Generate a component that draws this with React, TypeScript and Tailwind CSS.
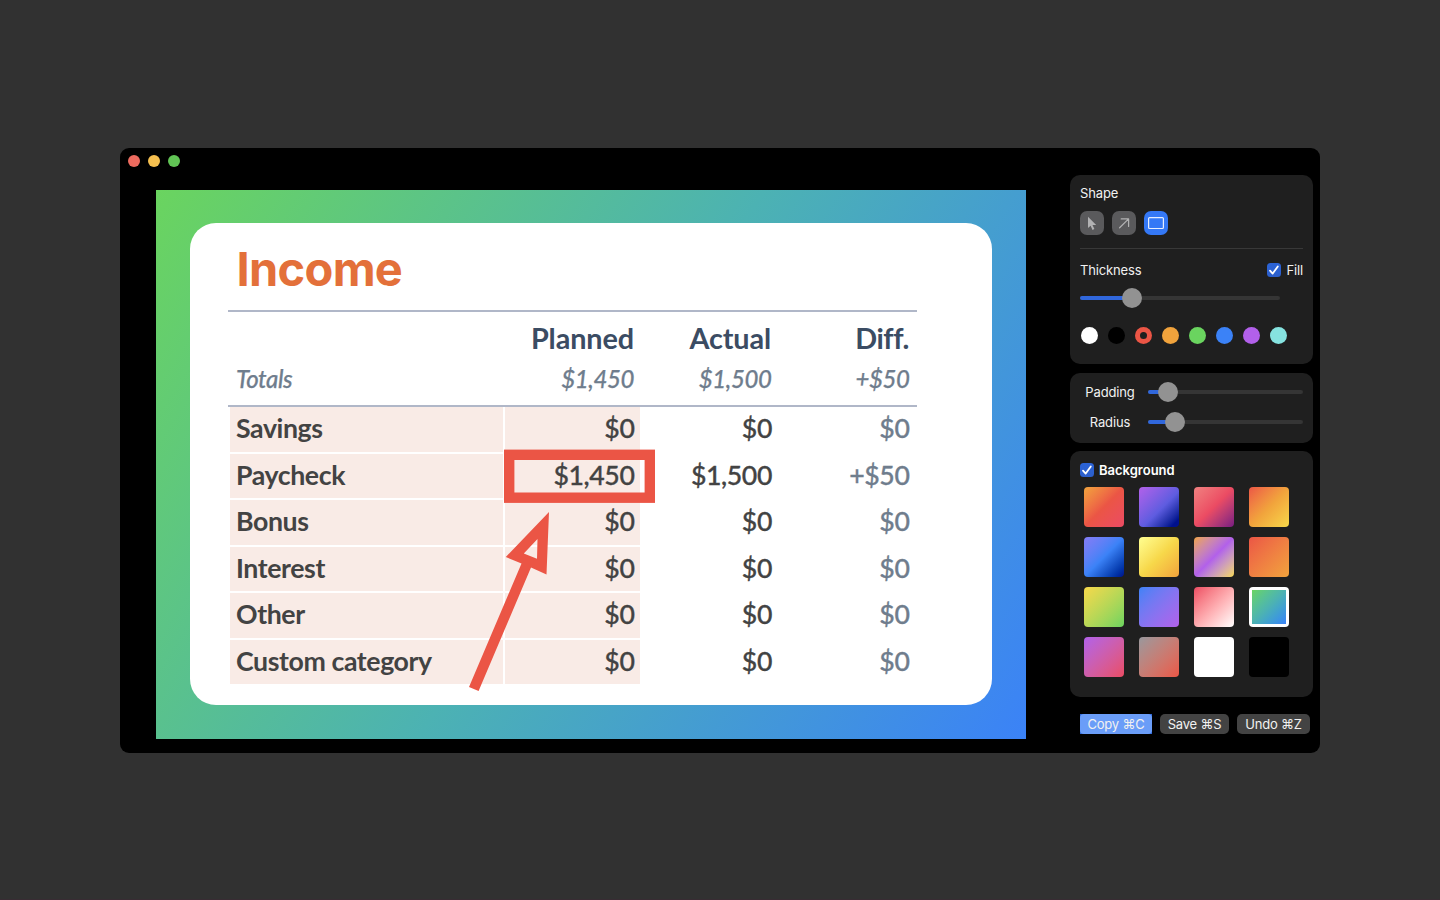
import React from "react";

type Row = { name: string; planned: string; actual: string; diff: string };

const rows: Row[] = [
  { name: "Savings", planned: "$0", actual: "$0", diff: "$0" },
  { name: "Paycheck", planned: "$1,450", actual: "$1,500", diff: "+$50" },
  { name: "Bonus", planned: "$0", actual: "$0", diff: "$0" },
  { name: "Interest", planned: "$0", actual: "$0", diff: "$0" },
  { name: "Other", planned: "$0", actual: "$0", diff: "$0" },
  { name: "Custom category", planned: "$0", actual: "$0", diff: "$0" },
];

const colors = [
  "bg-white",
  "bg-black",
  "bg-[#eb5545]",
  "bg-[#f1a33c]",
  "bg-[#6ad45f]",
  "bg-[#3b82f7]",
  "bg-[#b260ea]",
  "bg-[#86e3e0]",
];

const swatches = [
  "bg-linear-135 from-[#f1a33c] via-[#eb5545] to-[#eb4b63]",
  "bg-linear-135 from-[#b260ea] via-[#5e5ce0] via-55% to-[#00108c] to-90%",
  "bg-linear-135 from-[#f08080] via-[#eb4b63] to-[#7a1a80]",
  "bg-linear-135 from-[#eb5545] via-[#f1a33c] to-[#f7d84a]",
  "bg-linear-135 from-[#847cf5] via-[#3b82f7] to-[#00108c]",
  "bg-linear-135 from-[#ffff90] via-[#f7d84a] to-[#f1a33c]",
  "bg-linear-135 from-[#f1a33c] via-[#b260ea] to-[#f7d84a]",
  "bg-linear-135 from-[#eb5545] to-[#f1a33c]",
  "bg-linear-135 from-[#f7d84a] to-[#6ad45f]",
  "bg-linear-135 from-[#3b82f7] to-[#b260ea]",
  "bg-linear-135 from-[#eb4b63] to-white",
  "bg-linear-135 from-[#6ad45f] via-[#4cb2b3] to-[#3b82f7]",
  "bg-linear-135 from-[#b260ea] to-[#eb4b63]",
  "bg-linear-135 from-[#98989d] to-[#eb5545]",
  "bg-white",
  "bg-black",
];

function Checkbox() {
  return (
    <span className="flex size-3.5 shrink-0 items-center justify-center rounded-[3.5px] bg-linear-to-b from-[#2b63d6] to-[#2c5fcb]">
      <svg viewBox="0 0 14 14" className="size-3.5" fill="none" stroke="#fff" strokeWidth="1.8" strokeLinecap="round" strokeLinejoin="round">
        <path d="M3 7.6 5.7 10.6 10.8 3.4" />
      </svg>
    </span>
  );
}

function Slider({ value, width }: { value: number; width: number }) {
  return (
    <div className="relative flex h-5 items-center" style={{ width }}>
      <div className="h-1 w-full overflow-hidden rounded-full bg-[#353535]">
        <div className="h-full bg-[#3067dc]" style={{ width: value }} />
      </div>
      <div className="absolute top-0 size-5 -translate-x-1/2 rounded-full bg-[#929292]" style={{ left: value }} />
    </div>
  );
}

function ShapeTools() {
  return (
    <div className="flex gap-2">
      <div className="size-6 rounded-[7px] bg-[#5a5a5c]">
        <svg viewBox="0 0 24 24" className="size-6" fill="#b2b2b3">
          <path d="M8 5.8v11.3l2.6-2.4 1.9 4.2 1.9-.9-1.9-4h3.7z" />
        </svg>
      </div>
      <div className="size-6 rounded-[7px] bg-[#5a5a5c]">
        <svg viewBox="0 0 24 24" className="size-6" fill="none" stroke="#b2b2b3" strokeWidth="1.2" strokeLinecap="round" strokeLinejoin="round">
          <path d="M7.6 16.8 16.6 7.9M9.2 7.9h7.4v7.6" />
        </svg>
      </div>
      <div className="size-6 rounded-[7px] bg-[#3478f6]">
        <svg viewBox="0 0 24 24" className="size-6" fill="none" stroke="#e4edff" strokeWidth="1.2">
          <rect x="4.6" y="6.6" width="14.8" height="10.9" rx="1" />
        </svg>
      </div>
    </div>
  );
}

function BudgetTable() {
  return (
    <div className="font-['Lato',sans-serif] text-[26.7px] font-medium tracking-[-0.4px] text-[#434343]">
      <div className="mt-[13px] h-[97px] w-[689px] border-y-2 border-[#b0b7c8]">
        <div className="flex h-[53px] items-center text-[28.8px] font-bold tracking-[-0.1px] text-[#3b4c63]">
          <span className="ml-auto w-[137px] text-right">Planned</span>
          <span className="w-[137px] text-right">Actual</span>
          <span className="mr-[8px] w-[138px] text-right tracking-[-0.4px]">Diff.</span>
        </div>
        <div className="flex h-[28px] items-center text-[24px] text-[#6f7d8d] italic [-webkit-text-stroke:0.25px]">
          <span className="ml-[8px]">Totals</span>
          <span className="ml-auto w-[137px] text-right">$1,450</span>
          <span className="w-[137.5px] text-right">$1,500</span>
          <span className="mr-[7.5px] w-[138px] text-right">+$50</span>
        </div>
      </div>
      <div className="ml-[2px] flex h-[277px] flex-col gap-[2px]">
        {rows.map((row) => (
          <div key={row.name} className="flex flex-1 items-center leading-[38px]">
            <div className="mr-[2px] flex h-full w-[273px] items-center bg-[#f9ebe6] pb-[2px] pl-[6px] font-bold">{row.name}</div>
            <div className="flex h-full w-[135px] items-center justify-end bg-[#f9ebe6] pr-[5.5px] pb-[2px] [-webkit-text-stroke:0.3px]">{row.planned}</div>
            <div className="w-[132px] pb-[2px] text-right [-webkit-text-stroke:0.3px]">{row.actual}</div>
            <div className="w-[137.5px] pb-[2px] text-right text-[#6f7d8d] [-webkit-text-stroke:0.3px]">{row.diff}</div>
          </div>
        ))}
      </div>
    </div>
  );
}

function Canvas() {
  return (
    <div className="relative mt-[41.5px] ml-[36px] h-[549.5px] w-[870px] bg-linear-[122.3deg] from-[#6ad45f] via-[#4cb2b3] to-[#3b82f7] px-[33.5px] pt-[33.5px]">
      <div className="h-[482px] w-[802.5px] rounded-[26px] bg-white pt-4 pl-[38.5px]">
        <h1 className="h-[58px] pl-[8.5px] font-['Inter',sans-serif] text-[47px] leading-[59px] font-bold tracking-[-0.7px] text-[#e3703a]">Income</h1>
        <BudgetTable />
      </div>
      <svg viewBox="156 189.5 870 549.5" className="absolute inset-0 h-full w-full" fill="none">
        <rect x="509.2" y="454.3" width="140.6" height="42.9" stroke="#eb5545" strokeWidth="10.4" />
        <path fill="#eb5545" fillRule="evenodd" d="M549 511.5 505.8 556.5 521.5 563 469 686.5 478.6 690.5 531 567 546.5 574ZM537.5 538.5 537 558.3 523.8 553Z" />
      </svg>
    </div>
  );
}

function Button({ label, className }: { label: string; className: string }) {
  return <button className={`flex h-5 items-center justify-center text-[13px] tracking-[-0.2px] ${className}`}>{label}</button>;
}

function Sidebar() {
  return (
    <aside className="absolute top-[27px] right-[7px] flex w-[243px] flex-col font-['Inter',sans-serif] text-[13px] leading-4 tracking-[-0.15px] text-[#f1f1f1]">
      <section className="h-[189px] rounded-[10px] bg-[#1f1f1f] px-2.5 pt-2.5">
        <div className="mb-[10px]">Shape</div>
        <ShapeTools />
        <div className="mt-[13px] h-px bg-[#383838]" />
        <div className="mt-[11.5px] flex h-[18px] items-center justify-between">
          <span>Thickness</span>
          <label className="flex items-center gap-[5px]">
            <Checkbox />
            <span>Fill</span>
          </label>
        </div>
        <div className="mt-[9.5px]">
          <Slider width={200} value={52} />
        </div>
        <div className="mt-[19px] ml-px flex gap-[10.5px]">
          {colors.map((color, i) => (
            <div key={color} className={`flex size-[16.5px] items-center justify-center rounded-full ${color}`}>
              {i === 2 && <span className="size-[7px] rounded-full bg-[#1f1f1f]" />}
            </div>
          ))}
        </div>
      </section>
      <section className="mt-[8.5px] flex h-[70px] flex-col gap-2.5 rounded-[10px] bg-[#1f1f1f] pt-[9.5px] pr-2.5 pl-2.5">
        <div className="flex items-center justify-between">
          <span className="w-[60px] text-center">Padding</span>
          <Slider width={155} value={19.5} />
        </div>
        <div className="flex items-center justify-between">
          <span className="w-[60px] text-center">Radius</span>
          <Slider width={155} value={26.5} />
        </div>
      </section>
      <section className="mt-[8px] h-[246px] rounded-[10px] bg-[#1f1f1f] px-2.5 pt-[11px]">
        <label className="flex items-center gap-[5px] font-semibold tracking-normal text-white">
          <Checkbox />
          <span>Background</span>
        </label>
        <div className="mt-[9px] ml-[3.5px] grid w-[206px] grid-cols-[repeat(4,40px)] justify-between gap-y-[10px]">
          {swatches.map((swatch, i) => (
            <div key={swatch} className={`h-[40px] rounded-[4px] ${i === 11 ? "bg-white p-[3px]" : ""}`}>
              <div className={`size-full ${i === 11 ? "" : "rounded-[4px]"} ${swatch}`} />
            </div>
          ))}
        </div>
      </section>
      <div className="mt-[17.5px] ml-[10px] flex gap-2 whitespace-nowrap">
        <div className="bg-[#2f68d8]">
          <Button label="Copy ⌘C" className="w-[72px] rounded-[4px] bg-[#6a9df8]" />
        </div>
        <Button label="Save ⌘S" className="w-[69px] rounded-[5px] bg-[#434343]" />
        <Button label="Undo ⌘Z" className="w-[73px] rounded-[5px] bg-[#434343]" />
      </div>
    </aside>
  );
}

export default function App() {
  return (
    <main className="h-[900px] w-[1440px] overflow-hidden border-b border-[#382c33] bg-[#313131] px-[120px] pt-[148px]">
      <div className="relative flex h-[605px] w-[1200px] rounded-[9px] bg-black">
        <div className="absolute top-[7px] left-2 flex gap-2">
          <span className="size-3 rounded-full bg-[#ed6b5f]" />
          <span className="size-3 rounded-full bg-[#f5bf4f]" />
          <span className="size-3 rounded-full bg-[#61c455]" />
        </div>
        <Canvas />
        <Sidebar />
      </div>
    </main>
  );
}
